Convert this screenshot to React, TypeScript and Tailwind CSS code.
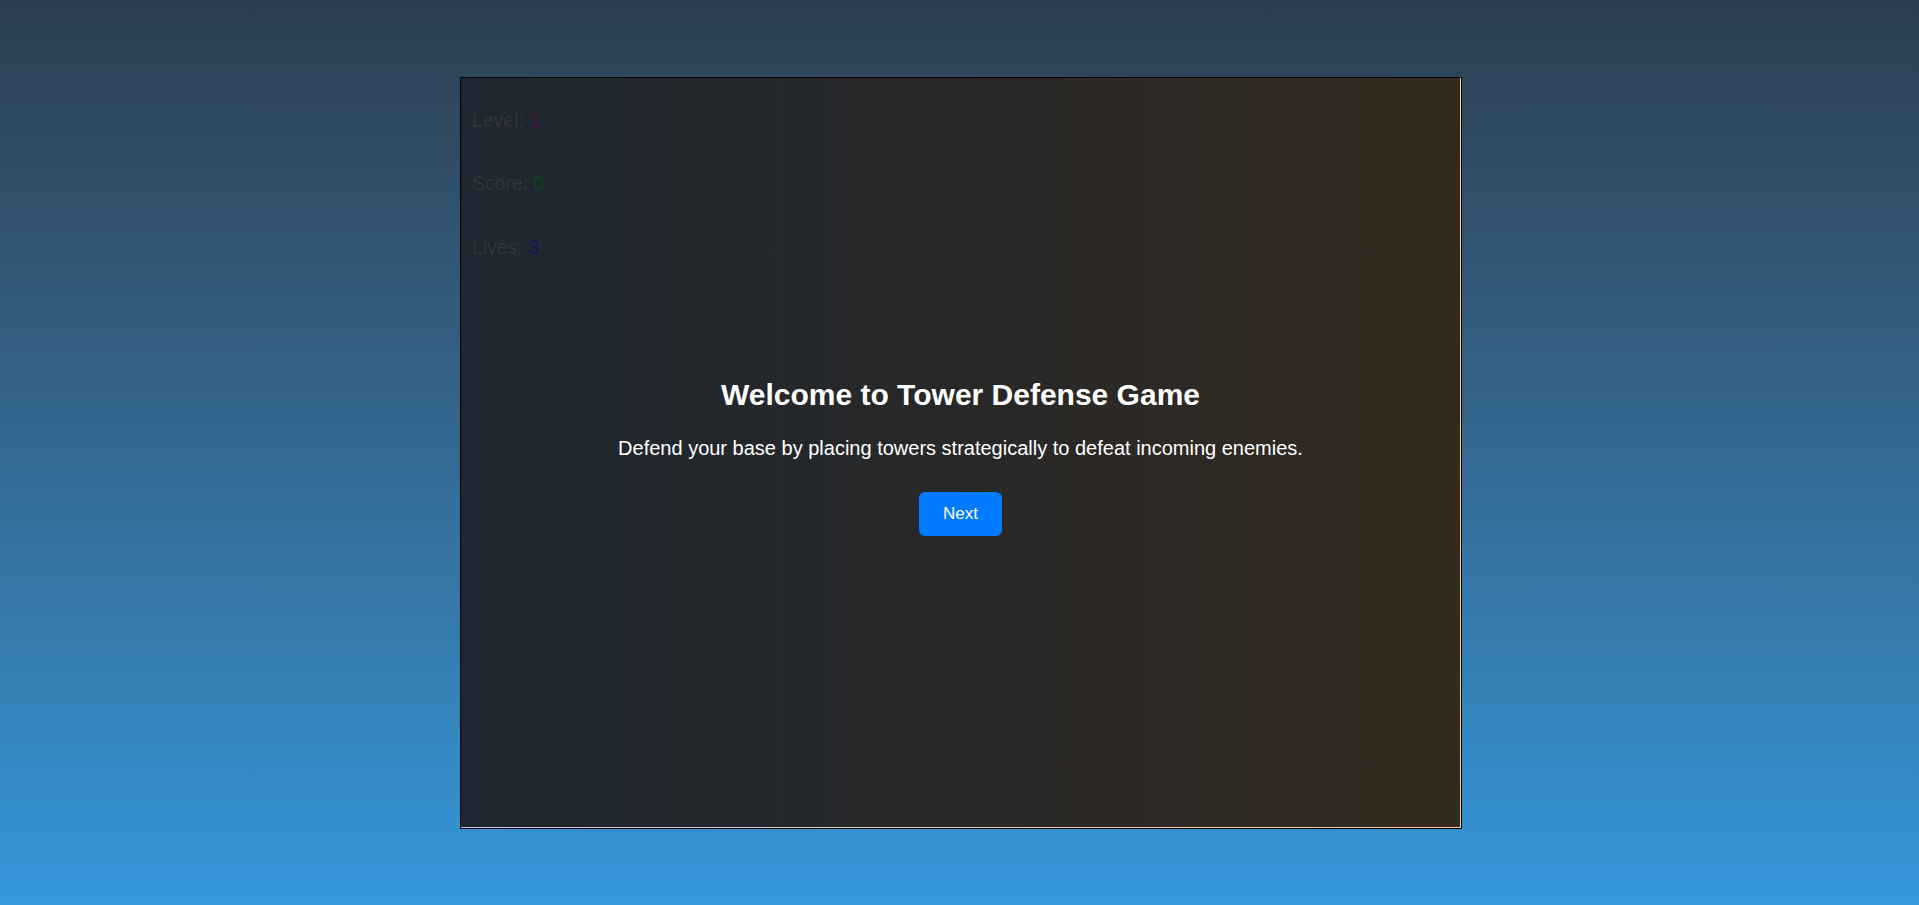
import React from 'react';

const hud = [
  { label: 'Level', value: 1, color: 'text-[#4a0e3a]' },
  { label: 'Score', value: 0, color: 'text-[#0e4512]' },
  { label: 'Lives', value: 3, color: 'text-[#141660]' },
];

const App: React.FC = () => {
  return (
    <div
      className="min-h-screen w-full flex items-center justify-center pl-[3px] bg-gradient-to-b from-[#2c3e50] to-[#3498db]"
      style={{ fontFamily: '"Liberation Sans", Arial, sans-serif' }}
    >
      {/* game board */}
      <div className="w-[1002px] h-[752px] border border-black bg-gradient-to-r from-[#a9c9ef] to-[#fbcfa3] pr-px pb-px flex">
        <div className="flex-1 grid bg-gradient-to-r from-[#1e2731] via-[#282828] to-[#352a1e]">
          {/* stats, dimmed under the overlay */}
          <div className="[grid-area:1/1] flex flex-col gap-[41.5px] pt-[31px] pl-[11px] text-[19.4px] leading-[22px] text-[#32353a]">
            {hud.map(item => (
              <div key={item.label}>
                {item.label}: <span className={item.color}>{item.value}</span>
              </div>
            ))}
          </div>

          {/* welcome message */}
          <div className="[grid-area:1/1] flex flex-col items-center justify-center pt-[10px] text-white text-center">
            <h2 className="text-[30px] leading-[34px] font-bold mb-[25px]">
              Welcome to Tower Defense Game
            </h2>
            <p className="text-[20px] leading-[23px] mb-[32px]">
              Defend your base by placing towers strategically to defeat incoming enemies.
            </p>
            <button className="bg-[#007bff] text-white text-[17px] leading-[20px] px-[24px] py-[12px] rounded-[6px]">
              Next
            </button>
          </div>
        </div>
      </div>
    </div>
  );
};

export default App;
